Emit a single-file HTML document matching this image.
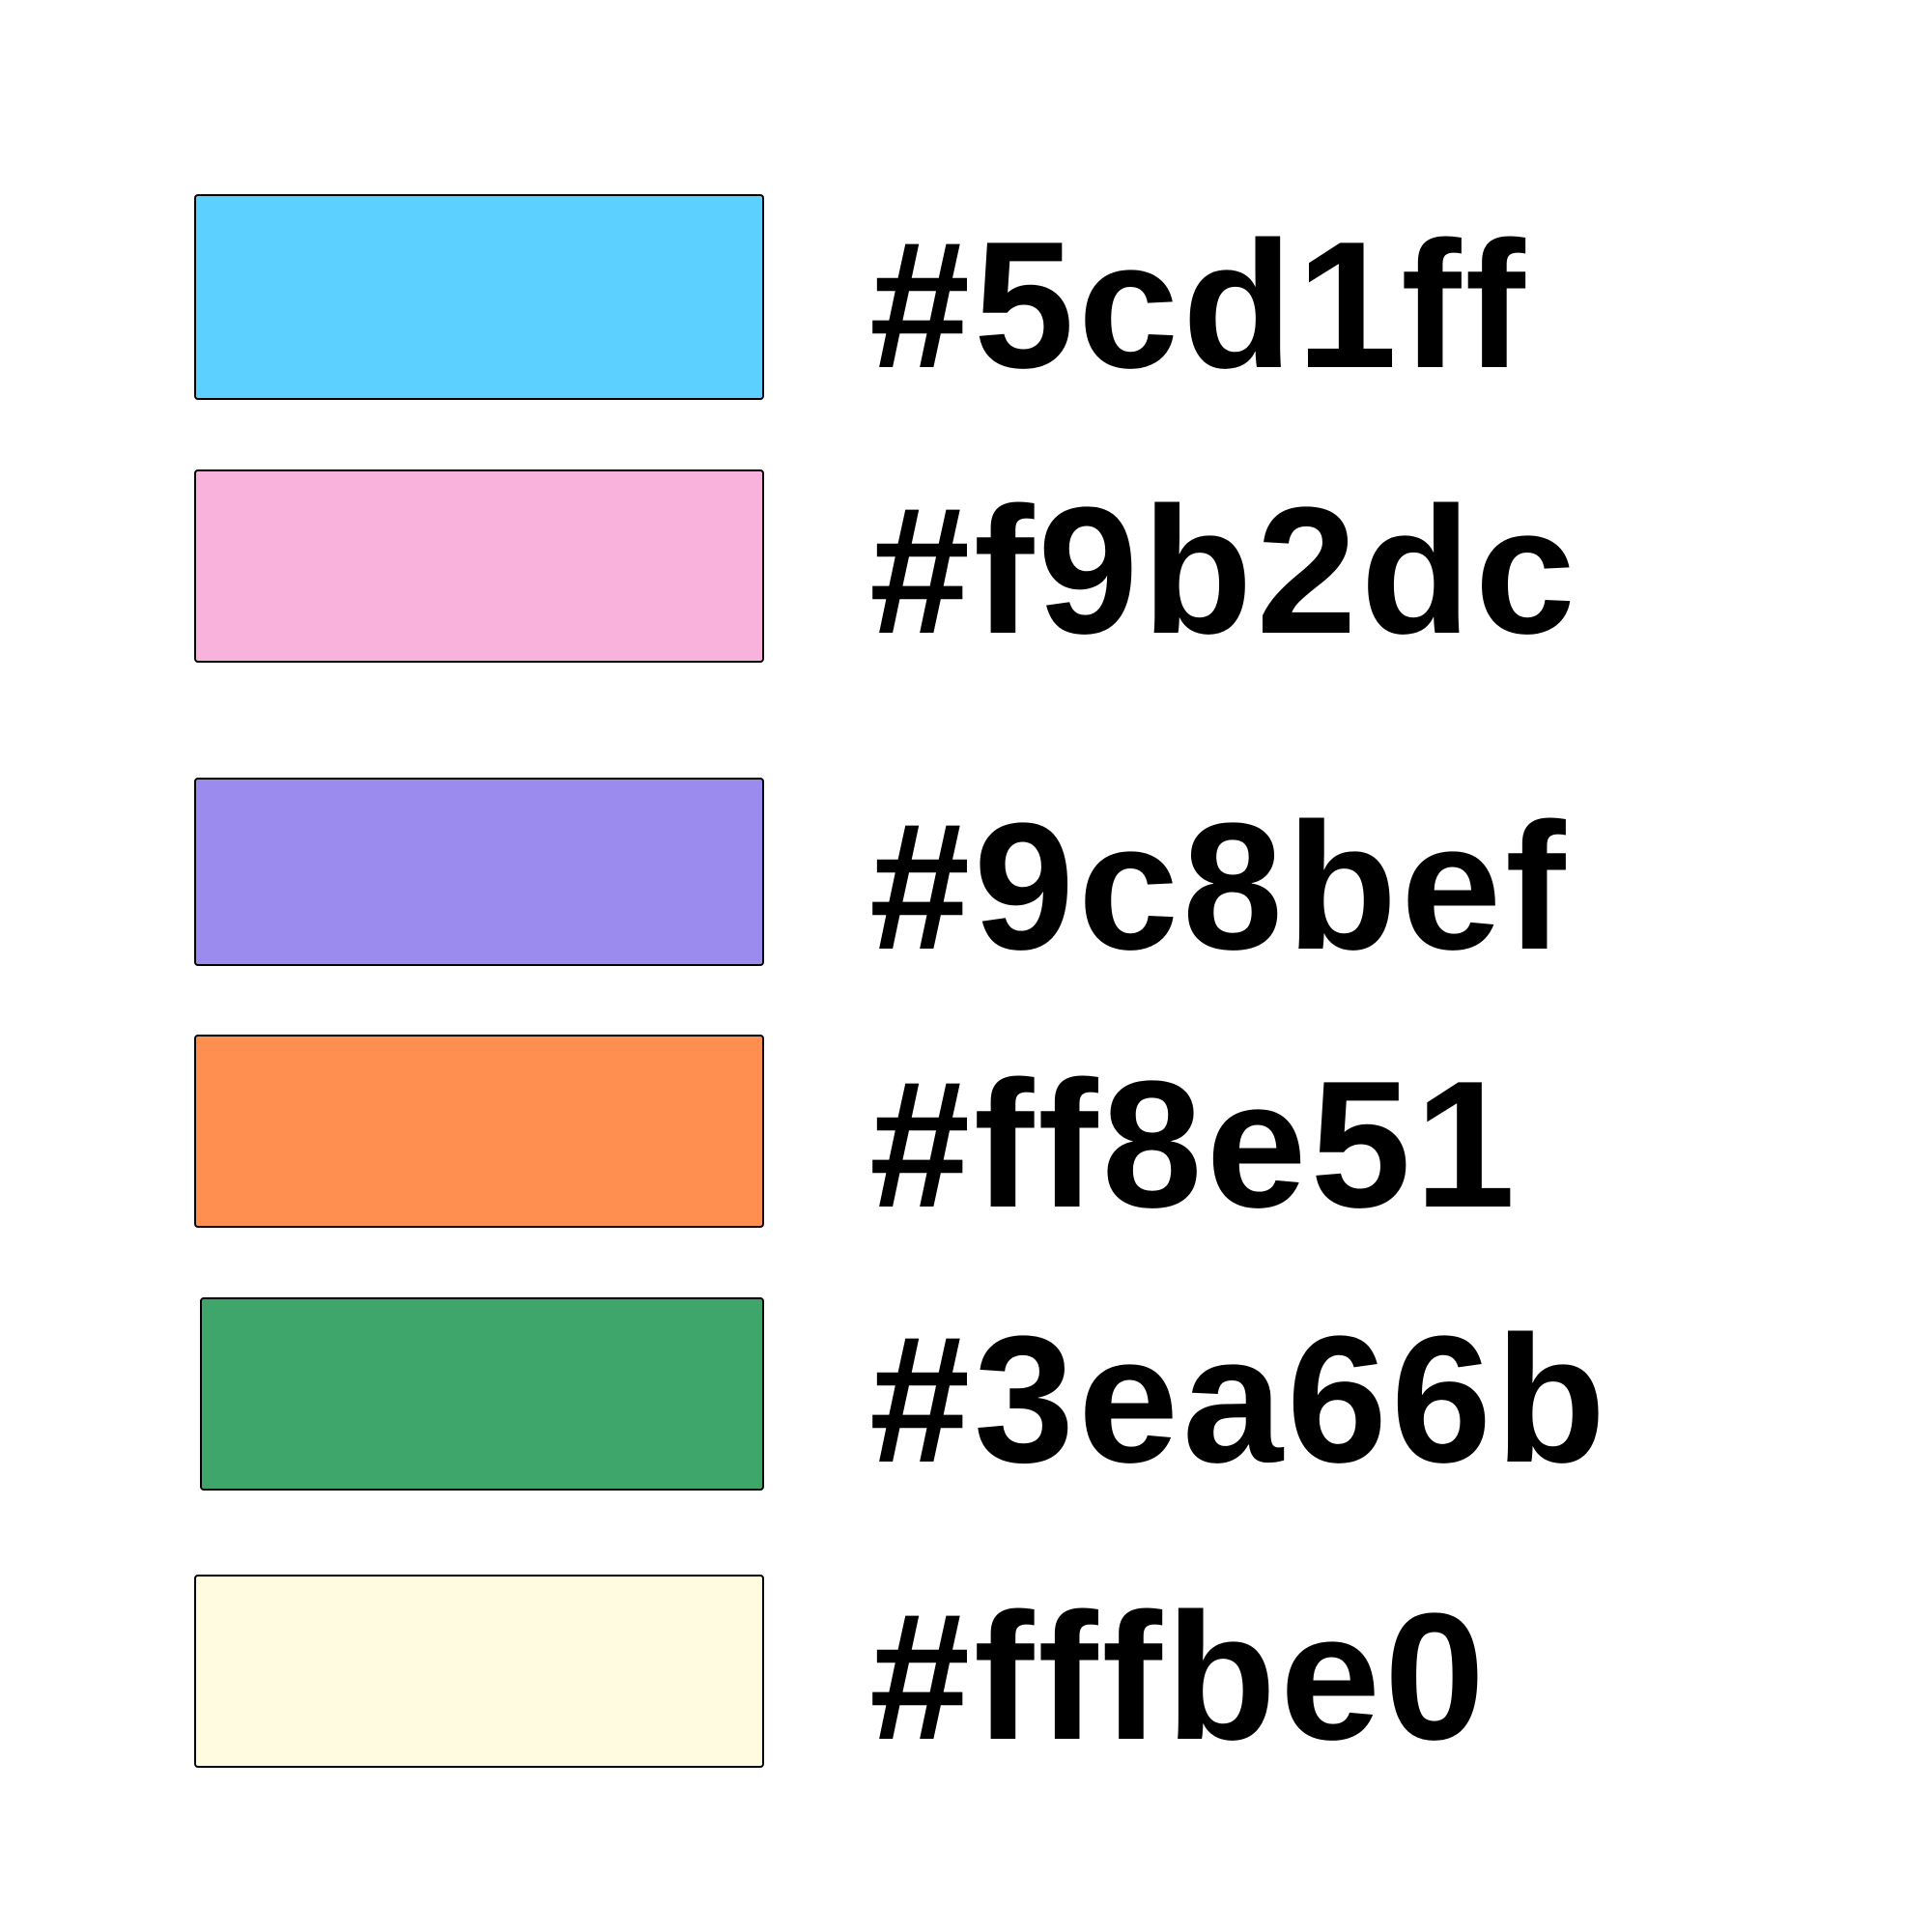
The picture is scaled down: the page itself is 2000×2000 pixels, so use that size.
<!DOCTYPE html>
<html><head><meta charset="utf-8"><style>
html,body{margin:0;padding:0;background:#fff;width:2000px;height:2000px;overflow:hidden}
.s{position:absolute;border:2px solid #000;border-radius:4px;box-sizing:border-box}
.t{position:absolute;left:900px;font-family:"Liberation Sans",sans-serif;font-weight:bold;font-size:187px;line-height:1;color:#000;letter-spacing:4px}
</style></head><body>
<div class="s" style="left:201px;top:201px;width:590px;height:213px;background:#5cd1ff"></div>
<div class="s" style="left:201px;top:486px;width:590px;height:200px;background:#f9b2dc"></div>
<div class="s" style="left:201px;top:805px;width:590px;height:195px;background:#9c8bef"></div>
<div class="s" style="left:201px;top:1071px;width:590px;height:200px;background:#ff8e51"></div>
<div class="s" style="left:207px;top:1343px;width:584px;height:200px;background:#3ea66b"></div>
<div class="s" style="left:201px;top:1630px;width:590px;height:200px;background:#fffbe0"></div>
<div class="t" style="top:222px">#5cd1ff</div>
<div class="t" style="top:497px">#f9b2dc</div>
<div class="t" style="top:824px">#9c8bef</div>
<div class="t" style="top:1091px">#ff8e51</div>
<div class="t" style="top:1355px">#3ea66b</div>
<div class="t" style="top:1642px">#fffbe0</div>
</body></html>
